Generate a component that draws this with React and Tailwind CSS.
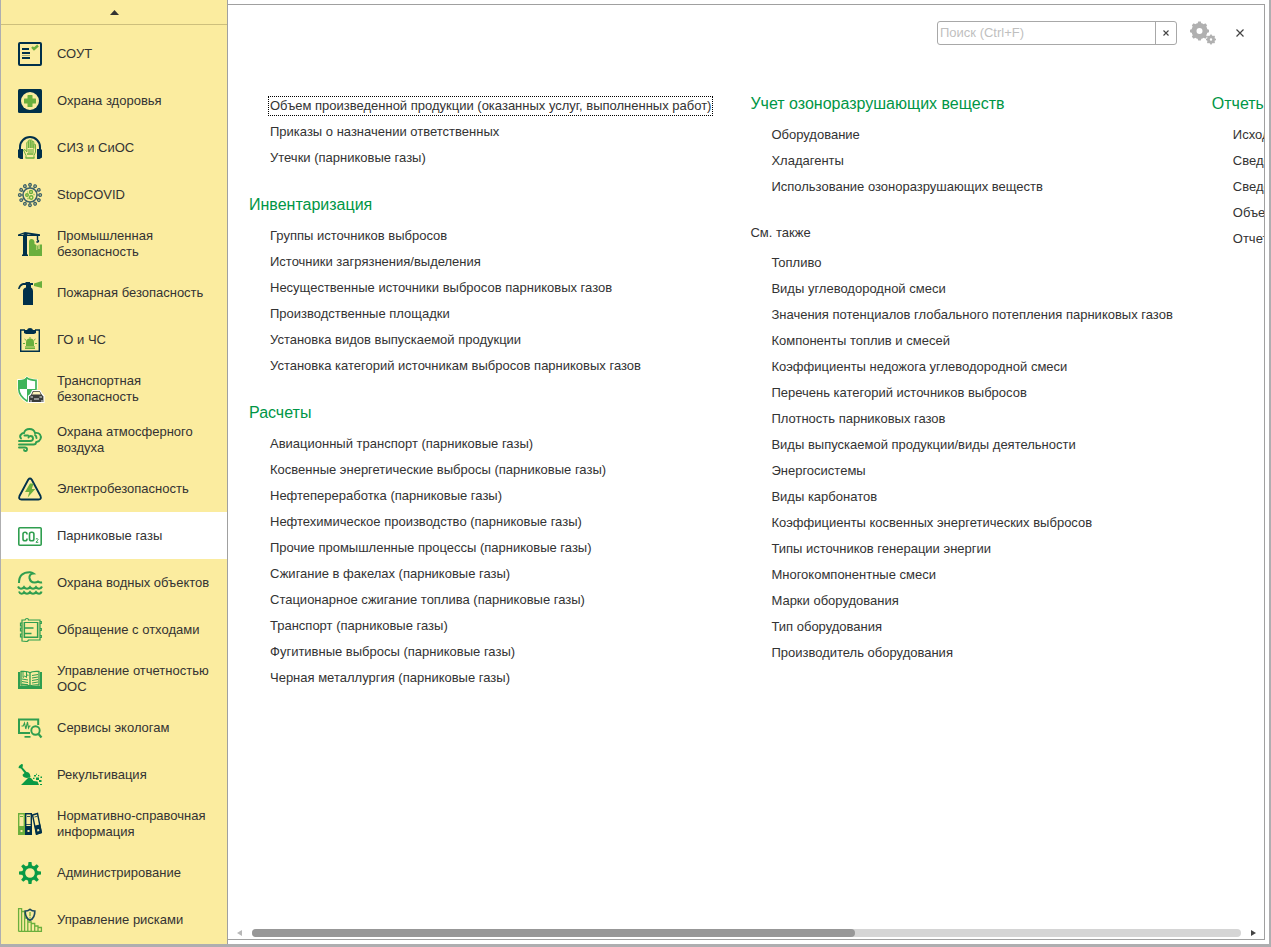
import React from "react";

const NAVY = "#00304a";
const LIME = "#6aaf3d";
const GREEN = "#2f9e4f";
const PALE = "#fbec9f";

function Svg({ children }) {
  return (
    <svg viewBox="0 0 24 24" className="size-6 shrink-0 overflow-visible" fill="none" aria-hidden="true">
      {children}
    </svg>
  );
}

const spokes = (n) => Array.from({ length: n }, (_, i) => (i * 360) / n);

function IconChecklist() {
  return (
    <Svg>
      <rect x="1" y="1" width="22" height="22" rx="1" stroke={NAVY} strokeWidth="2" />
      <path d="M4 7h7M4 11h8M4 16h8" stroke={NAVY} strokeWidth="2" />
      <path d="M4 13.5h8" stroke={NAVY} strokeWidth="1" opacity=".35" />
      <path d="M14 5l2 2 4-3.500" stroke={LIME} strokeWidth="2.400" />
    </Svg>
  );
}

function IconHealth() {
  return (
    <Svg>
      <rect width="24" height="24" rx="1.500" fill={NAVY} />
      <circle cx="12" cy="12" r="9" fill={PALE} />
      <path d="M9.500 6.500q0-.5.500-.5h4q.5 0 .5.500v3h3q.5 0 .5.500v4q0 .5-.5.500h-3v3q0 .5-.5.500h-4q-.5 0-.5-.5v-3h-3q-.5 0-.5-.5v-4q0-.5.500-.5h3z" fill={LIME} />
    </Svg>
  );
}

function IconHeadphones() {
  return (
    <Svg>
      <path d="M2 15v-4a10 10 0 0 1 20 0v4" stroke={NAVY} strokeWidth="2" />
      <path d="M1 13h4v10H2.500L0 21.500V14zM23 13h-4v10h2.500L24 21.500V14z" fill={NAVY} />
      <path d="M8 22v-2.500L5.500 14l1.500-.5 1.800 2.500V6.500q.8-1 1.600 0V12M10.400 12V4.500q.8-1 1.800 0V12M12.200 12V4.200q.9-.9 1.800.3V12M14 12V5.500q.9-.8 1.800.3V12.500M15.800 12.500V8.500q.8-.6 1.700 0V16L16 19.500V22" stroke={LIME} strokeWidth="1" />
      <path d="M7.500 22h9M9 18h6.500" stroke={LIME} strokeWidth="1.500" />
      <path d="M9.500 13h6.500v4H10z" fill={LIME} opacity=".55" />
    </Svg>
  );
}

function IconVirus() {
  return (
    <Svg>
      <circle cx="12" cy="12" r="7" stroke="#3d6268" strokeWidth="1.500" />
      {spokes(12).map((a) => (
        <g key={a} transform={`rotate(${a} 12 12)`} stroke="#3d6268">
          <path d="M12 5V3" strokeWidth="1.200" />
          <circle cx="12" cy="1.800" r="1.300" strokeWidth="1.300" />
        </g>
      ))}
      <g stroke={LIME} strokeWidth="1.400">
        <circle cx="13" cy="9" r="1.500" />
        <circle cx="9" cy="12" r="1.300" />
        <circle cx="13.200" cy="14.500" r="1.700" />
        <path d="M15.500 11.500h1M9.500 15.500h1M9.500 9h.5" />
      </g>
    </Svg>
  );
}

function IconCrane() {
  return (
    <Svg>
      <path d="M0 2.500L7 0l15 2.200V4H0zM5 2h4v21H5z" fill={NAVY} />
      <path d="M2.500 2.800l3-1v1zM9.500 2l4 .8h-4z" fill={PALE} />
      <path d="M4 23.200h6M19.500 4v4M18.500 9.500q1.500 1.500 2-.5l-1-1" stroke={NAVY} strokeWidth="1.400" />
      <path d="M11 24V10q0-3 2.500-3t3 3v2l2 1v11z" fill={LIME} />
      <path d="M16.800 24v-6h2.400v-4l1.300-1.500V17h1v-4.500H24V24z" fill={LIME} />
    </Svg>
  );
}

function IconExtinguisher() {
  return (
    <Svg>
      <path d="M5 10q0-3 3-3.500V4H5Q2.500 5 1.500 8L0 8Q1 3 5 2h2l1-1h4v1h3v2h-2v2.500q2 .7 2 3.500V24H5z" fill={NAVY} />
      <path d="M16 2.500L24 0v7l-8-2z" fill={LIME} />
    </Svg>
  );
}

function IconAlarmBoard() {
  return (
    <Svg>
      <path d="M7 2H2.700v21.300h18.600V2H17" stroke={NAVY} strokeWidth="1.400" />
      <path d="M6 5V2h3q.5-2 3-2t3 2h3v3l-2 1H8z" fill={NAVY} />
      <path d="M8 18v-3.500a4 4 0 0 1 8 0V18h1v3H7v-3zM11.500 9h1v2h-1z" fill={LIME} />
      <path d="M6.500 11l1.800 1.500M17.500 11l-1.800 1.500M5 15.500h2M19 15.500h-2" stroke={LIME} />
      <path d="M7 19h10" stroke={PALE} strokeWidth=".7" />
    </Svg>
  );
}

function IconTransport() {
  return (
    <Svg>
      <path d="M9 0l3 2 7 .8v8.500L9 25Q0 20 0 11V2.800L6 2.500z" fill="#fff" stroke="#fff" strokeWidth="1.500" />
      <path d="M0 3q6 .5 9-3v12H0zM9 12h9q-.3 8-9 12.500z" fill="#3fb45a" />
      <path d="M9 1q3 2.300 9 2.300V12Q16 20 9 24 1 19 .8 12z" stroke="#3fb45a" strokeWidth="1.700" />
      <path d="M10.500 25.500V19l2-1.500 2-4H22l2.500 4 1.500 1.500v6.500z" fill="#3a3c3a" stroke="#fff" strokeWidth="1.200" />
      <path d="M15.500 14.800h6l1.300 2.700H14z" fill="#fff3bd" />
      <path d="M12.500 20h2.500M21.500 20H24M16 22h5M12 24h2M23 24h2" stroke="#fff" strokeWidth=".9" />
    </Svg>
  );
}

function IconCloudWind() {
  return (
    <Svg>
      <g stroke={GREEN} strokeWidth="1.900" strokeLinecap="round">
        <path d="M3 10.500Q1 8 3.500 6q1-1 2.500-1Q7 1 11.500 1T17 5q3.500-.5 5 1.500t.5 4.500q-1 2.500-4 3" />
        <path d="M6.500 7.500h3.500M1 13h11q3 0 3-2.500t-2.500-2.500Q11 8 10.500 9.500M1 16.500h14.500q2.500 0 2.500-2M17 7q1.500 1 1.500 3" />
        <path d="M1 19.500h6q2 0 2 1.800T7.500 23 6 22" />
      </g>
    </Svg>
  );
}

function IconElectric() {
  return (
    <Svg>
      <path d="M10.300 2.500q1.700-2 3.400 0L22.500 19q1.300 3.500-2 3.500h-17q-3.300 0-2-3.500z" stroke={NAVY} strokeWidth="1.900" />
      <path d="M12 6.500L7 15h4.300L9.700 20.500 17.300 12H13.800L15.500 6.500z" fill={LIME} />
    </Svg>
  );
}

function IconCO2() {
  return (
    <Svg>
      <rect x=".8" y="3.800" width="22.400" height="17.400" rx="1" stroke={GREEN} strokeWidth="1.600" />
      <g stroke={GREEN} strokeWidth="1.600">
        <path d="M9 10.500V10q0-1.800-2-1.800T5 10v5q0 1.800 2 1.800T9 15v-.5" />
        <rect x="11.500" y="8.200" width="4.400" height="8.600" rx="1.900" />
        <path d="M17.800 15q2-1 2.200.3 0 .9-2 3h2.300" strokeWidth="1" />
      </g>
    </Svg>
  );
}

function IconWater() {
  return (
    <Svg>
      <g stroke={GREEN} strokeWidth="2.100">
        <path d="M1 12Q1 1 12 1.200q2 .2 3.500 1.300Q11 3 11.500 7q.8 4.500 5 4.500 2.200 0 3.500-1 2 1.500 4 .8" />
        <path d="M0 15.500q1 2.200 3 2.200t3-1.500q1 1.500 3 1.500t3-1.500q1 1.500 3 1.500t3-1.500q1 1.500 3 1.500t3-2.200" />
        <path d="M1 20.500q.8 2.200 2.500 2.200T6 21.200q1 1.500 3 1.500t3-1.500q1 1.500 3 1.500t3-1.500q1 1.500 3 1.500t2.500-2.200" />
      </g>
    </Svg>
  );
}

function IconWaste() {
  return (
    <Svg>
      <g stroke={GREEN} strokeWidth="1.200">
        <path d="M4 2h3q.5-1.500 2-1.500T10.500 2H22v20H10.500q-.5 1.500-2 1.500L4 23z" />
        <path d="M6.500 4.500h13v15h-13zM4 5H2.500v3H4M4 10H2.500v3H4M4 16H2.500v3H4M22 3.500h1.300v2H22M22 10.500h1.300v2H22M22 17.500h1.300v2H22" />
        <path d="M6.500 10h9M6.500 15.500h7M6.500 19.200h13" strokeWidth="1.500" />
        <path d="M20.800 4v16M5.200 4v16" strokeWidth="1" opacity=".5" />
      </g>
    </Svg>
  );
}

function IconBook() {
  return (
    <Svg>
      <path d="M0 5h2v14h9l1 1 1-1h9V5h2v17H0z" fill={GREEN} />
      <path d="M12 6q-2-2-9-1.500V18q7-.5 9 1.500 2-2 9-1.500V4.500Q14 4 12 6zv13.500" stroke={GREEN} strokeWidth="1.300" />
      <path d="M14 8.500l6-1M14 11l6-1M14 13.500l6-1M14 16l6-1M9 8l1.500.3M4 12l6 1M4 14.500l6 1M4 17l6 .8" stroke={GREEN} strokeWidth="1" />
      <path d="M5 4v6.500l1.800-1.500 1.700 1.500V4.500" stroke={GREEN} strokeWidth="1" />
    </Svg>
  );
}

function IconServices() {
  return (
    <Svg>
      <path d="M20.200 9V3.500H1V17h11" stroke={GREEN} strokeWidth="2" />
      <path d="M6.500 20h6v1.700h-6z" fill={GREEN} />
      <path d="M3.500 10h1.700L6.500 7l1.300 6L9.500 6l1 6 1-2h1" stroke={GREEN} strokeWidth="1.100" />
      <circle cx="17.500" cy="14.500" r="4.200" stroke={GREEN} strokeWidth="1.900" />
      <path d="M20.500 18l3 3.500" stroke={GREEN} strokeWidth="2.200" />
    </Svg>
  );
}

function IconShovel() {
  return (
    <Svg>
      <g fill="#0a9a45">
        <path d="M1 3l2.500-2 1.500.5-.5 3 4 4.500q3.500 0 4 5l-3.500 1Q4 14 4.700 11.500L6.500 10 3 5.500.5 5z" />
        <path d="M3 22l5-5 3-3 2.500 1.500 2 2.500 4 .5 1.500 3.500z" />
        <path d="M22 21h2v1h-2zM18 14.500h3v2.500h-3zM21 17h2.500v2H21zM16 12h2v1.500h-2zM20 12h1.200v1.200H20zM22.500 13.500H24V15h-1.500zM15 14.800h1.500v1.300H15zM18 10.800h1v1h-1z" />
      </g>
    </Svg>
  );
}

function IconBinders() {
  return (
    <Svg>
      <path d="M.7 1.700h5.600v20.600H.7z" stroke={LIME} strokeWidth="1.400" />
      <path d="M0 14h7v9H0z" fill={LIME} />
      <path d="M2 4.500h3" stroke={LIME} />
      <path d="M7.700 1.700h5.600v20.600H7.700z" stroke={NAVY} strokeWidth="1.400" />
      <path d="M7 14h7v9H7z" fill={NAVY} />
      <path d="M9 4.500h3M8 12.500h5" stroke={NAVY} strokeWidth=".8" />
      <path d="M14.500 3l5-1.500 3.800 19-4.800 1.600z" stroke={NAVY} strokeWidth="1.400" />
      <path d="M16.500 13.800l5.800-1.500L24 21l-6 2z" fill={NAVY} />
      <path d="M16.500 5l3-.8" stroke={NAVY} strokeWidth=".8" />
      <path d="M2.500 18h2v2h-2zM9.500 18h2v2h-2zM19 17.500l2-.5.4 2-2 .5z" fill={PALE} />
    </Svg>
  );
}

function IconGear() {
  return (
    <Svg>
      {spokes(8).map((a) => (
        <path key={a} d="M10 5l.5-4h3l.5 4z" fill="#0a9a45" transform={`rotate(${a} 12 12)`} />
      ))}
      <circle cx="12" cy="12" r="6.300" stroke="#0a9a45" strokeWidth="3" />
    </Svg>
  );
}

function IconRisk() {
  return (
    <Svg>
      <path d="M.6 23.400V.6h3v22.800M3.600 3.500h3v19.900M6.600 10h3.200v13.400M9.800 14h3.400v9.400M13.200 15.500h3.500v7.900M16.700 18H20v5.400M20 19.500h3.400v3.900H.6" stroke={LIME} strokeWidth="1.300" />
      <path d="M12 1.300Q9.800 3 7.200 3q-.2 7 4.800 9.300Q17 10 16.800 3 14.200 3 12 1.300z" fill={PALE} stroke="#1d4a5c" strokeWidth="1.700" />
      <path d="M12 4v4.300M12 9.200v1.300" stroke={LIME} strokeWidth="1.300" />
    </Svg>
  );
}

const sections = [
  { label: "СОУТ", Icon: IconChecklist },
  { label: "Охрана здоровья", Icon: IconHealth },
  { label: "СИЗ и СиОС", Icon: IconHeadphones },
  { label: "StopCOVID", Icon: IconVirus },
  { label: "Промышленная безопасность", Icon: IconCrane },
  { label: "Пожарная безопасность", Icon: IconExtinguisher },
  { label: "ГО и ЧС", Icon: IconAlarmBoard },
  { label: "Транспортная безопасность", Icon: IconTransport },
  { label: "Охрана атмосферного воздуха", Icon: IconCloudWind },
  { label: "Электробезопасность", Icon: IconElectric },
  { label: "Парниковые газы", Icon: IconCO2, active: true },
  { label: "Охрана водных объектов", Icon: IconWater },
  { label: "Обращение с отходами", Icon: IconWaste },
  { label: "Управление отчетностью ООС", Icon: IconBook },
  { label: "Сервисы экологам", Icon: IconServices },
  { label: "Рекультивация", Icon: IconShovel },
  { label: "Нормативно-справочная информация", Icon: IconBinders },
  { label: "Администрирование", Icon: IconGear },
  { label: "Управление рисками", Icon: IconRisk },
];

const columns = [
  [
    {
      links: [
        "Объем произведенной продукции (оказанных услуг, выполненных работ)",
        "Приказы о назначении ответственных",
        "Утечки (парниковые газы)",
      ],
      focused: 0,
    },
    {
      title: "Инвентаризация",
      links: [
        "Группы источников выбросов",
        "Источники загрязнения/выделения",
        "Несущественные источники выбросов парниковых газов",
        "Производственные площадки",
        "Установка видов выпускаемой продукции",
        "Установка категорий источникам выбросов парниковых газов",
      ],
    },
    {
      title: "Расчеты",
      links: [
        "Авиационный транспорт (парниковые газы)",
        "Косвенные энергетические выбросы (парниковые газы)",
        "Нефтепереработка (парниковые газы)",
        "Нефтехимическое производство (парниковые газы)",
        "Прочие промышленные процессы (парниковые газы)",
        "Сжигание в факелах (парниковые газы)",
        "Стационарное сжигание топлива (парниковые газы)",
        "Транспорт (парниковые газы)",
        "Фугитивные выбросы (парниковые газы)",
        "Черная металлургия (парниковые газы)",
      ],
    },
  ],
  [
    {
      title: "Учет озоноразрушающих веществ",
      links: ["Оборудование", "Хладагенты", "Использование озоноразрушающих веществ"],
    },
    {
      title: "См. также",
      minor: true,
      links: [
        "Топливо",
        "Виды углеводородной смеси",
        "Значения потенциалов глобального потепления парниковых газов",
        "Компоненты топлив и смесей",
        "Коэффициенты недожога углеводородной смеси",
        "Перечень категорий источников выбросов",
        "Плотность парниковых газов",
        "Виды выпускаемой продукции/виды деятельности",
        "Энергосистемы",
        "Виды карбонатов",
        "Коэффициенты косвенных энергетических выбросов",
        "Типы источников генерации энергии",
        "Многокомпонентные смеси",
        "Марки оборудования",
        "Тип оборудования",
        "Производитель оборудования",
      ],
    },
  ],
  [
    {
      title: "Отчеты",
      links: ["Исходные данные", "Сведения", "Сведения", "Объем", "Отчет"],
    },
  ],
];

function Sidebar() {
  return (
    <nav aria-label="Разделы" className="flex w-[227px] shrink-0 flex-col border-r border-[#a0a0a0] bg-[#fbec9f]">
      <button type="button" aria-label="Прокрутить вверх" className="flex h-[25px] items-center justify-center border-b border-[#cdbf7c]">
        <svg viewBox="0 0 9 5" className="h-[5px] w-[9px]" aria-hidden="true">
          <path d="M0 5L4.500 0 9 5z" fill="#333" />
        </svg>
      </button>
      <ul className="pt-[5px]">
        {sections.map(({ label, Icon, active }) => (
          <li key={label}>
            <a
              href="#"
              aria-current={active ? "page" : undefined}
              className={`flex min-h-[47px] items-center gap-[15px] pt-2.5 pr-3 pb-[9px] pl-[17px] leading-4 ${active ? "bg-white" : ""}`}
            >
              <Icon />
              <span>{label}</span>
            </a>
          </li>
        ))}
      </ul>
    </nav>
  );
}

function Group({ group, first }) {
  return (
    <section>
      {group.title &&
        (group.minor ? (
          <h2 className="mt-6 mb-2 leading-[18px]">{group.title}</h2>
        ) : (
          <h2 className={`mb-1.5 text-base leading-6 text-[#009646] ${first ? "" : "mt-[22px]"}`}>{group.title}</h2>
        ))}
      <ul className="pl-[19px]">
        {group.links.map((text, i) => (
          <li key={i} className="flex h-[26px] items-center">
            <a
              href="#"
              className={`border border-dotted px-px leading-[18px] ${group.focused === i ? "border-black" : "border-transparent"}`}
            >
              {text}
            </a>
          </li>
        ))}
      </ul>
    </section>
  );
}

function Toolbar() {
  return (
    <div className="flex h-14 items-center justify-end pr-3">
      <div className="flex h-6 w-60 overflow-hidden rounded-[3px] border border-[#a8a8a8]">
        <input
          type="text"
          aria-label="Поиск"
          placeholder="Поиск (Ctrl+F)"
          className="min-w-0 flex-1 px-0.5 outline-none placeholder:text-[#bfbfbf]"
        />
        <button type="button" aria-label="Очистить" className="flex w-[21px] items-center justify-center border-l border-[#a8a8a8]">
          <svg viewBox="0 0 6 6" className="size-1.5" aria-hidden="true">
            <path d="M.5.5l5 5M5.500.5l-5 5" stroke="#444" strokeWidth="1.100" />
          </svg>
        </button>
      </div>
      <button type="button" aria-label="Настройки" className="ml-3">
        <svg viewBox="0 0 27 24" className="h-6 w-[27px]" aria-hidden="true">
          <g fill="none" stroke="#b0b0b0">
            <circle cx="10.500" cy="10" r="5.500" strokeWidth="5" />
            <circle cx="22" cy="18.500" r="2.600" strokeWidth="2.800" />
          </g>
          {spokes(8).map((a) => (
            <g key={a} fill="#b0b0b0">
              <path d="M8.500 3l.7-2.500h2.600l.7 2.500z" transform={`rotate(${a} 10.500 10)`} />
              <path d="M21 15l.3-1.500h1.400L23 15z" transform={`rotate(${a} 22 18.500)`} />
            </g>
          ))}
        </svg>
      </button>
      <button type="button" aria-label="Закрыть" className="ml-3 flex size-6 items-center justify-center">
        <svg viewBox="0 0 8 8" className="size-2" aria-hidden="true">
          <path d="M.5.5l7 7M7.500.5l-7 7" stroke="#444" strokeWidth="1.200" />
        </svg>
      </button>
    </div>
  );
}

function ScrollBar() {
  return (
    <div className="flex h-3 items-center gap-2.5 pr-2 pl-[9px]">
      <svg viewBox="0 0 5 6" className="h-1.5 w-[5px]" aria-hidden="true">
        <path d="M5 0v6L0 3z" fill="#b8b8b8" />
      </svg>
      <div className="h-2 flex-1 rounded-full bg-[#d5d5d5]">
        <div className="h-2 w-[61%] rounded-full bg-[#979797]" />
      </div>
      <svg viewBox="0 0 5 6" className="h-1.5 w-[5px]" aria-hidden="true">
        <path d="M0 0v6L5 3z" fill="#444" />
      </svg>
    </div>
  );
}

export default function App() {
  return (
    <div className="flex min-h-screen bg-[#aeaeb0] pr-0.5 pb-[3px] pl-px font-['Liberation_Sans',Arial,sans-serif] text-[13px] text-[#333]">
      <Sidebar />
      <div className="flex min-w-0 flex-1 bg-white pt-1 pr-1 pb-1">
        <main className="flex min-w-0 flex-1 flex-col border-y border-r border-[#a0a0a0]">
          <Toolbar />
          <div className="flex-1 overflow-hidden pt-[31px] pl-[21px]">
            <div className="flex w-max gap-[37px]">
              {columns.map((groups, c) => (
                <div key={c} className={c === 0 ? "pt-px" : ""}>
                  {groups.map((group, g) => (
                    <Group key={g} group={group} first={g === 0} />
                  ))}
                </div>
              ))}
            </div>
          </div>
          <ScrollBar />
        </main>
      </div>
    </div>
  );
}
